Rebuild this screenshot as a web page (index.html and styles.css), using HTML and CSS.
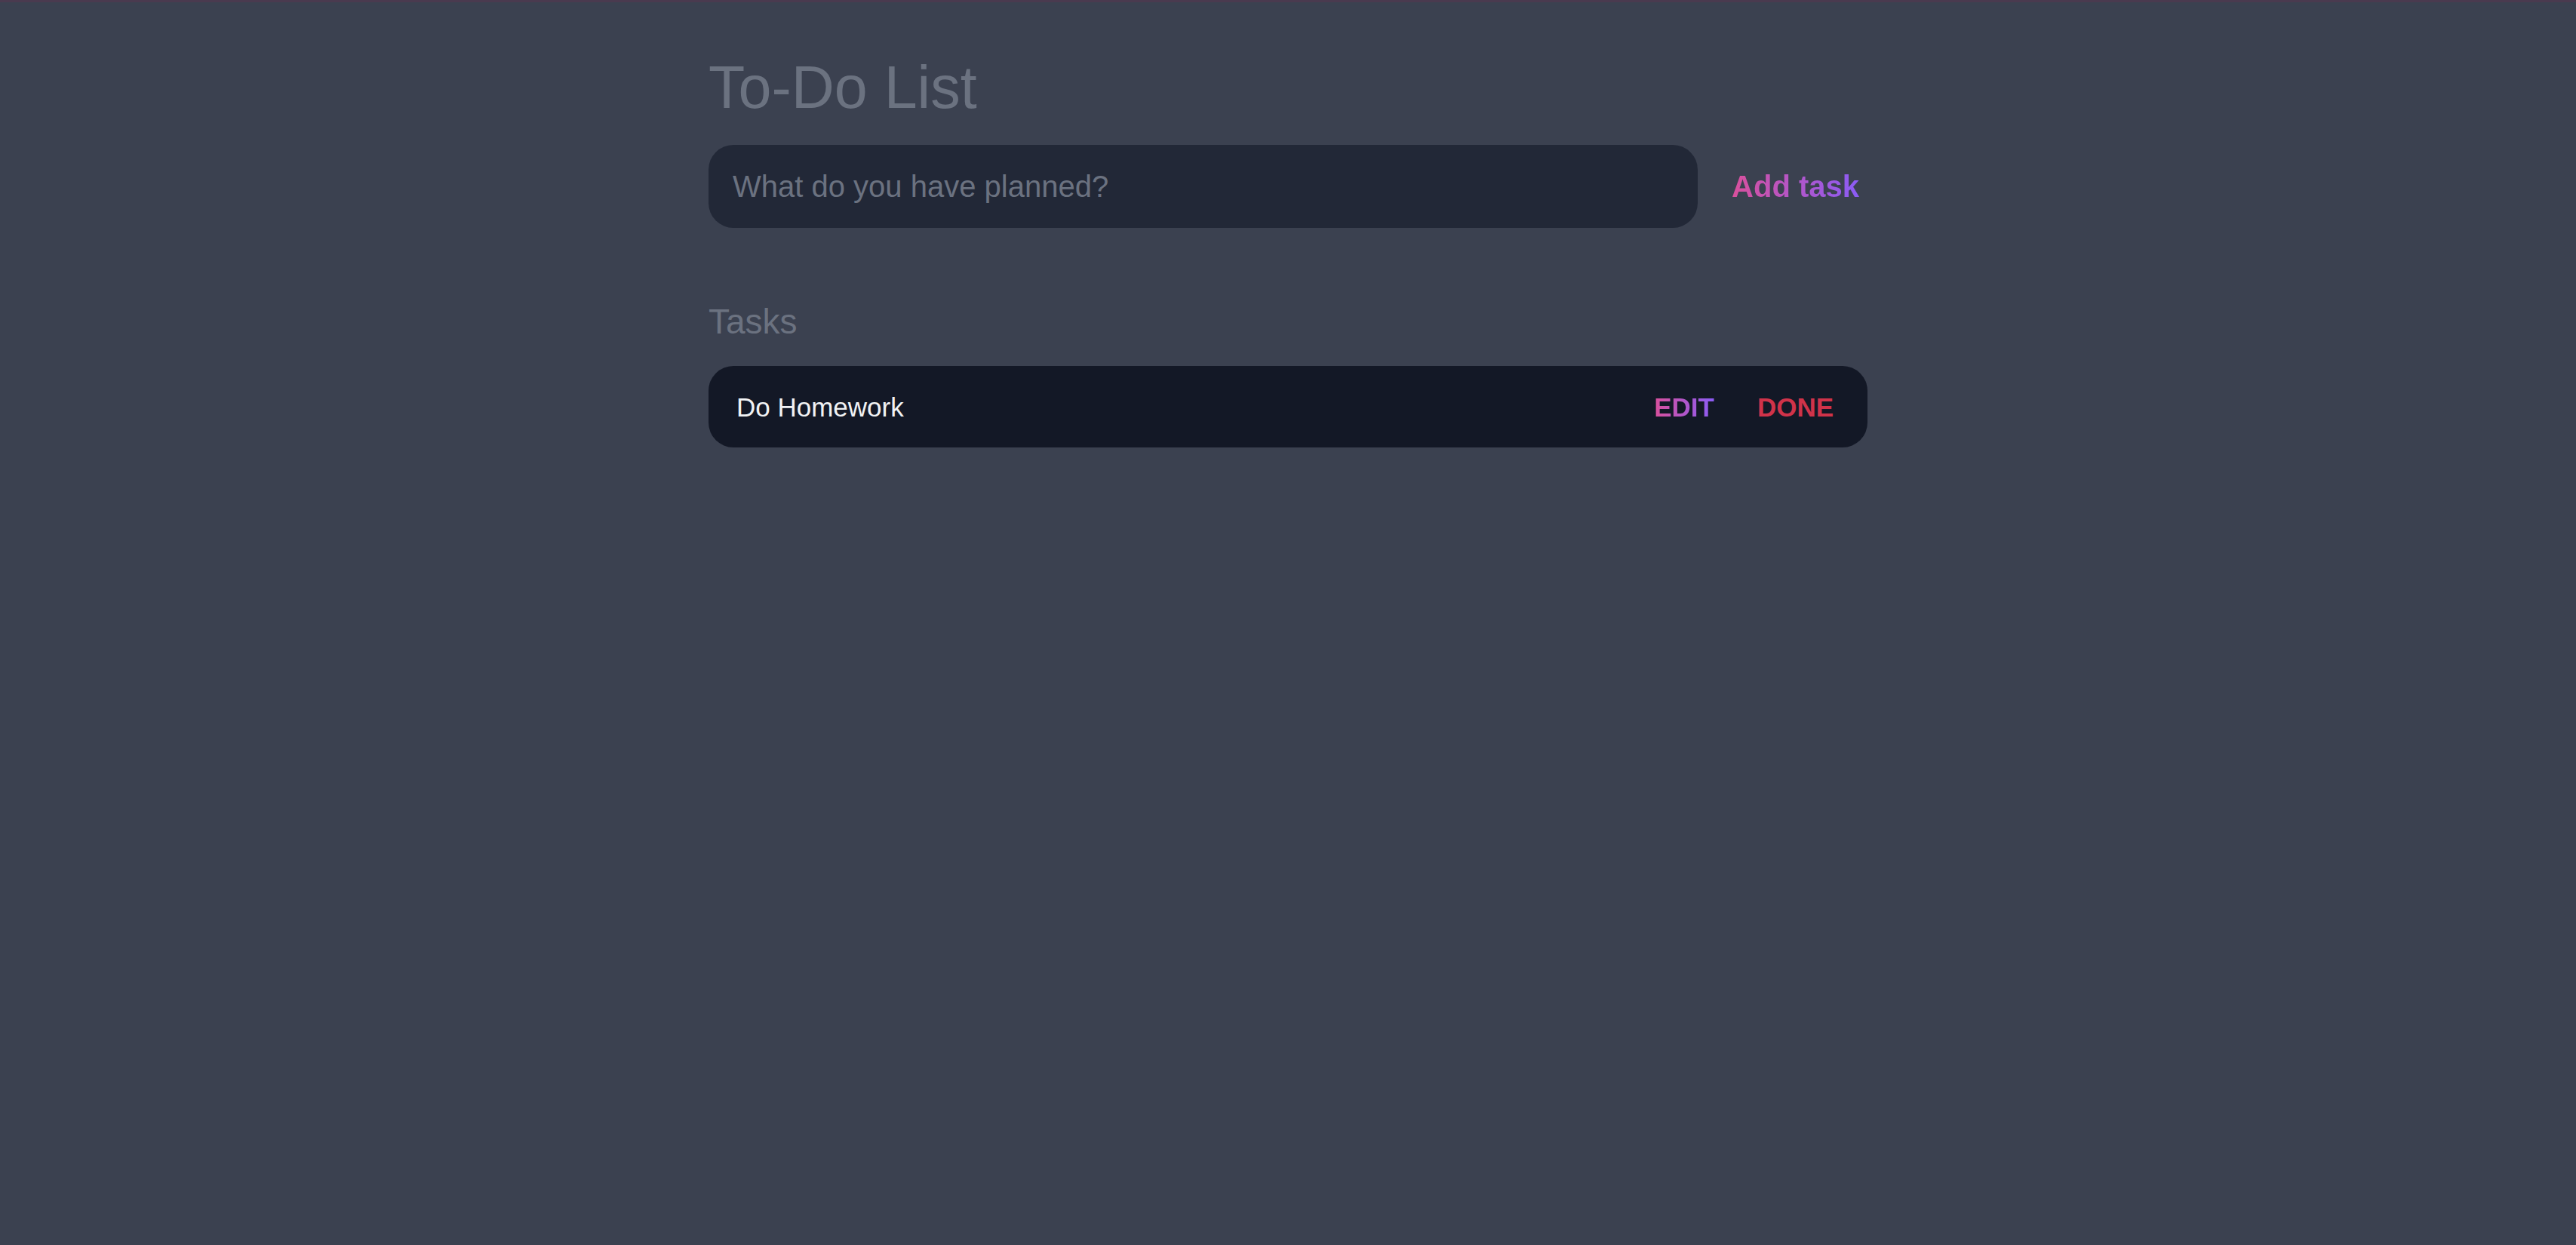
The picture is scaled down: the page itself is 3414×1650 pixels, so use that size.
FILE: index.html
```html
<!DOCTYPE html>
<html lang="en">
<head>
<meta charset="utf-8">
<title>To-Do List</title>
<link rel="stylesheet" href="styles.css">
</head>
<body>
<div class="topbar"></div>
<main class="container">
  <h1 class="title">To-Do List</h1>
  <form class="new-task">
    <input class="task-input" type="text" placeholder="What do you have planned?">
    <button class="add-btn" type="button"><span class="grad">Add task</span></button>
  </form>
  <section class="tasks">
    <h2 class="tasks-heading">Tasks</h2>
    <div class="task">
      <span class="task-text">Do Homework</span>
      <div class="actions">
        <button class="act edit" type="button"><span class="grad">EDIT</span></button>
        <button class="act done" type="button">DONE</button>
      </div>
    </div>
  </section>
</main>
</body>
</html>
```
FILE: styles.css
```css
* { box-sizing: border-box; }
html, body { margin: 0; padding: 0; }
body {
  background: #3b4150;
  min-height: 1650px;
  font-family: "Liberation Sans", Arial, Helvetica, sans-serif;
}
.topbar {
  height: 3px;
  background: #4a3a4f;
}
.container {
  width: 1536px;
  margin: 0 auto;
  padding-top: 74px;
}
.title {
  margin: 0;
  font-size: 79px;
  line-height: 78px;
  font-weight: 300;
  color: #6b7280;
  letter-spacing: 0;
}
.new-task {
  display: flex;
  align-items: center;
  gap: 34px;
  margin: 37px 0 0;
}
.task-input {
  flex: 1;
  height: 110px;
  border: none;
  outline: none;
  border-radius: 33px;
  background: #222837;
  padding: 0 32px;
  font-family: inherit;
  font-size: 40px;
  color: #e5e7eb;
}
.task-input::placeholder { color: #6b7280; }
.add-btn {
  background: none;
  border: none;
  padding: 0 11px;
  font-family: inherit;
  font-size: 40px;
  line-height: 40px;
  font-weight: 700;
  cursor: pointer;
}
.grad {
  background: linear-gradient(to right, #d9509c, #8b5cf6);
  -webkit-background-clip: text;
  background-clip: text;
  color: transparent;
}
.tasks { margin-top: 102px; }
.tasks-heading {
  margin: 0;
  font-size: 46px;
  line-height: 45px;
  font-weight: 300;
  color: #6b7280;
}
.task {
  margin-top: 36px;
  height: 108px;
  background: #131826;
  border-radius: 33px;
  display: flex;
  align-items: center;
  justify-content: space-between;
  padding: 0 45px 0 37px;
}
.task-text {
  font-size: 35px;
  line-height: 35px;
  color: #f1f2f4;
}
.actions {
  display: flex;
  align-items: center;
  gap: 57px;
}
.act {
  background: none;
  border: none;
  padding: 0;
  font-family: inherit;
  font-size: 35px;
  line-height: 35px;
  font-weight: 700;
  cursor: pointer;
}
.done { color: #d0334a; }
```
